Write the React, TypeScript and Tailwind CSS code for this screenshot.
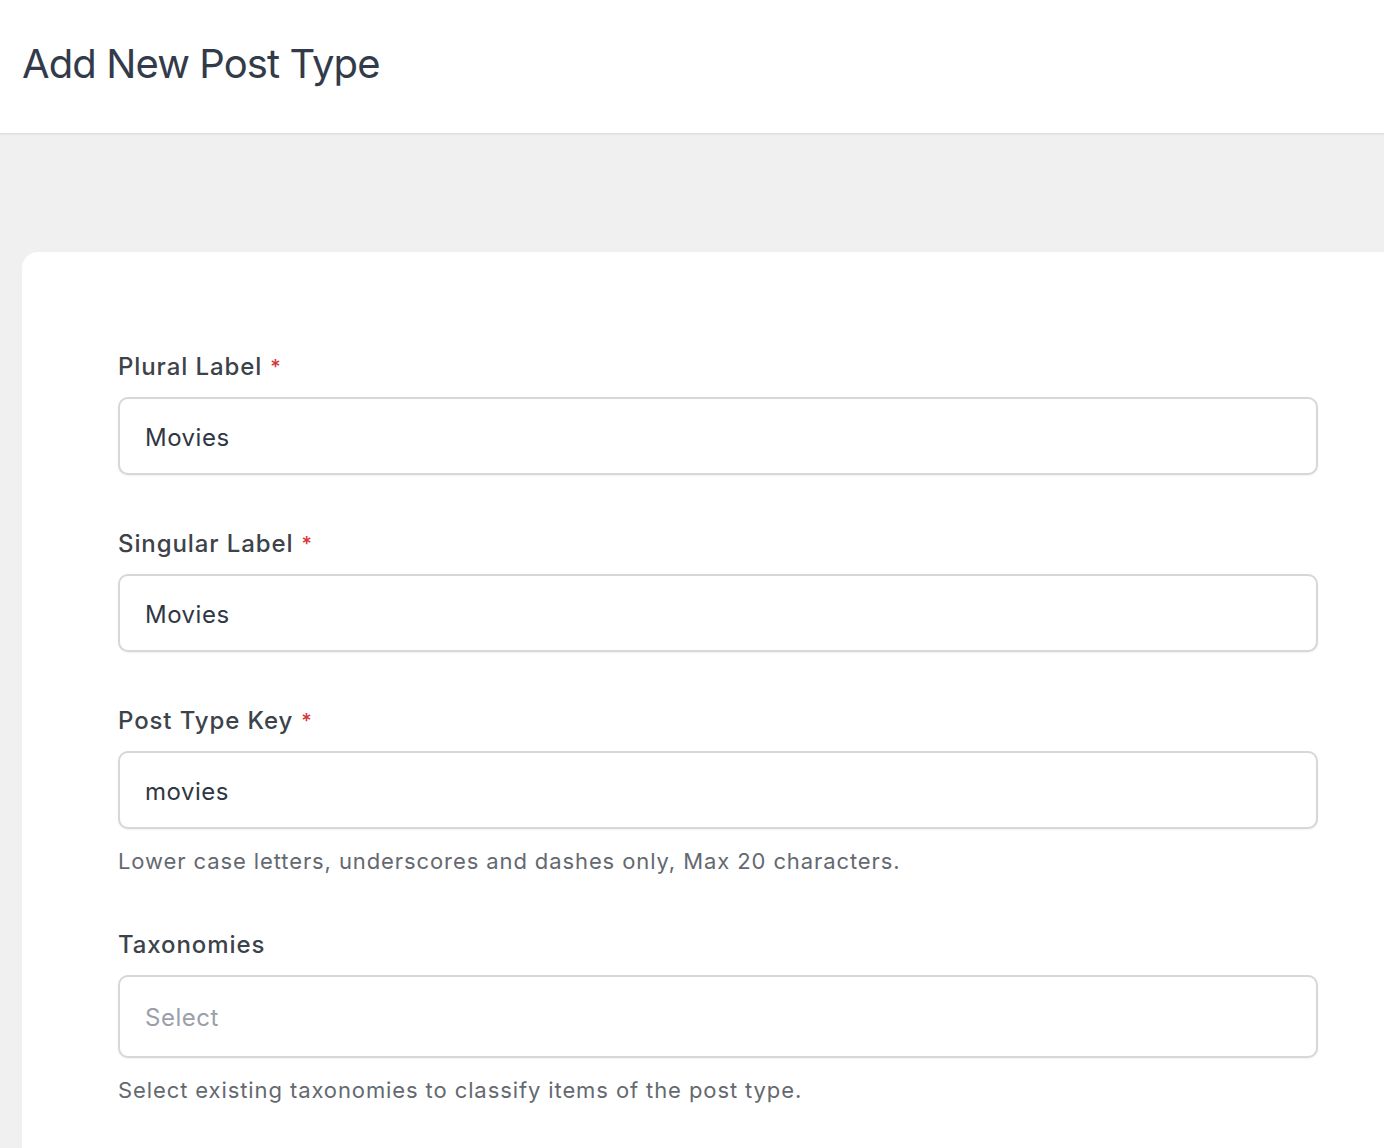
import React from "react";

interface FieldProps {
  label: string;
  required?: boolean;
  value?: string;
  placeholder?: string;
  help?: string;
  tall?: boolean;
}

function Field({ label, required, value, placeholder, help, tall }: FieldProps) {
  return (
    <div className="mb-[53px]">
      <label className="mb-[14px] flex items-center text-[24px] font-medium leading-[32px] tracking-[0.9px] text-[#3c434a]">
        {label}
        {required && <span className="ml-[8px] text-[20px] text-[#d63638]">*</span>}
      </label>
      <input
        readOnly
        value={value ?? ""}
        placeholder={placeholder}
        className={`w-full rounded-[10px] border-2 border-[#d5d7db] bg-white px-[25px] pt-[2px] text-[24px] tracking-[0.5px] text-[#2f3744] shadow-[0_1px_2px_rgba(0,0,0,0.06)] outline-none placeholder:text-[#9aa0ab] ${
          tall ? "h-[83px]" : "h-[78px]"
        }`}
      />
      {help && (
        <p className="mt-[17px] text-[22px] leading-[30px] tracking-[0.9px] text-[#646970]">{help}</p>
      )}
    </div>
  );
}

export default function App() {
  return (
    <div
      className="min-h-[1148px] bg-[#f0f0f1]"
      style={{ fontFamily: "Inter, 'Noto Sans', sans-serif" }}
    >
      <header className="flex h-[134px] items-center border-b border-[#dcdcde] bg-white px-[22px] shadow-[0_1px_2px_rgba(0,0,0,0.04)]">
        <h1 className="pb-[6px] text-[40px] font-normal tracking-[-0.9px] text-[#333b4b]">
          Add New Post Type
        </h1>
      </header>
      <main className="pl-[22px] pt-[118px]">
        <div className="rounded-tl-[16px] bg-white pb-[40px] pl-[96px] pt-[99px]">
          <div className="w-[1200px]">
            <Field label="Plural Label" required value="Movies" />
            <Field label="Singular Label" required value="Movies" />
            <Field
              label="Post Type Key"
              required
              value="movies"
              help="Lower case letters, underscores and dashes only, Max 20 characters."
            />
            <Field
              label="Taxonomies"
              placeholder="Select"
              tall
              help="Select existing taxonomies to classify items of the post type."
            />
          </div>
        </div>
      </main>
    </div>
  );
}
